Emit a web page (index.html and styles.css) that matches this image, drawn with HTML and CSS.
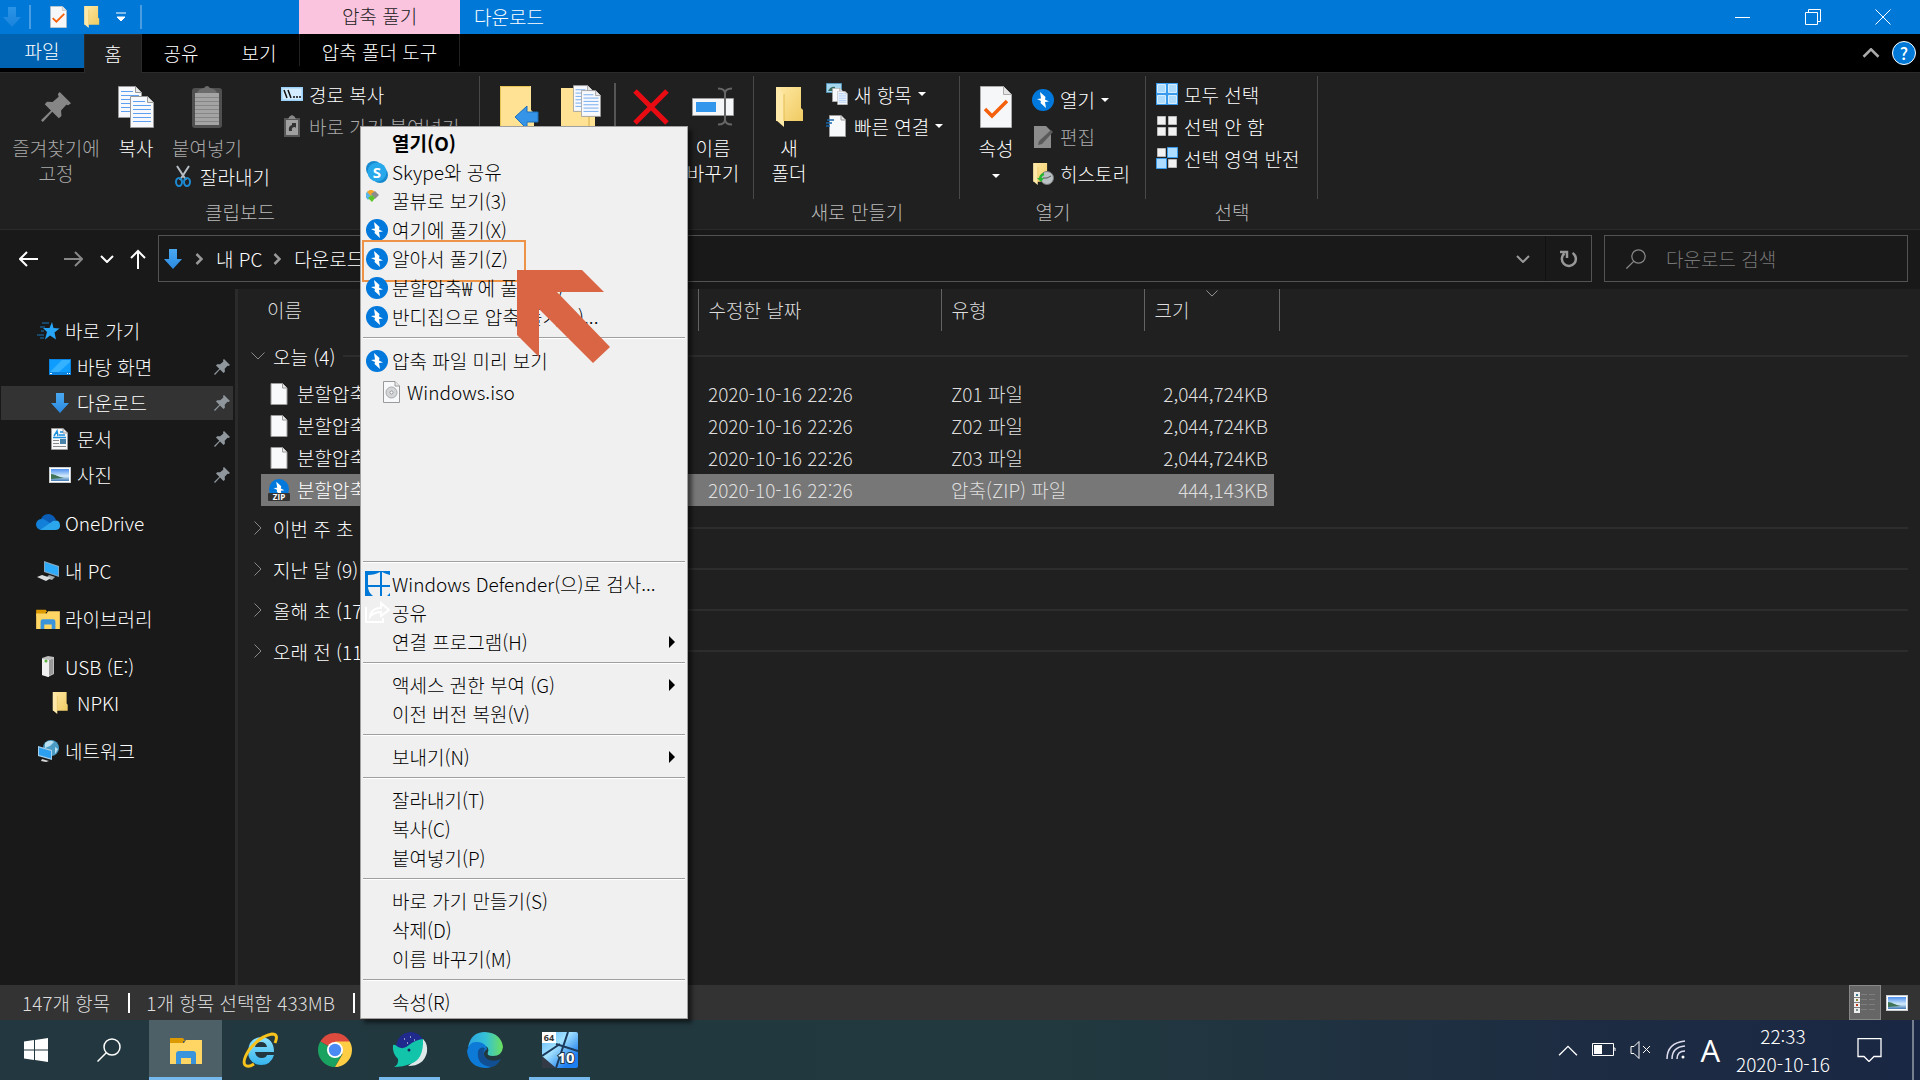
FILE: index.html
```html
<!DOCTYPE html>
<html lang="ko">
<head>
    <meta charset="UTF-8">
    <meta name="viewport" content="width=device-width, initial-scale=1.0">
    <title>다운로드</title>
    <link rel="stylesheet" href="styles.css">
</head>
<body>
    <!-- shared icons -->
    <svg class="sprite" aria-hidden="true">
        <defs>
            <linearGradient id="gFolder" x1="0" y1="0" x2="1" y2="1">
                <stop offset="0" stop-color="#ffe9a6"/>
                <stop offset="1" stop-color="#f0cb62"/>
            </linearGradient>
            <linearGradient id="gArrow" x1="0" y1="0" x2="0" y2="1">
                <stop offset="0" stop-color="#4aa8f0"/>
                <stop offset="1" stop-color="#2a8ae0"/>
            </linearGradient>
            <linearGradient id="gSky" x1="0" y1="0" x2="0" y2="1">
                <stop offset="0" stop-color="#4d8ff0"/>
                <stop offset="0.6" stop-color="#d5ecfa"/>
                <stop offset="1" stop-color="#3e78b4"/>
            </linearGradient>
            <linearGradient id="gIe" x1="0" y1="0" x2="0" y2="1">
                <stop offset="0" stop-color="#8fe3fd"/>
                <stop offset="1" stop-color="#35b4ee"/>
            </linearGradient>
            <linearGradient id="gEdge" x1="0" y1="0" x2="1" y2="0">
                <stop offset="0" stop-color="#2aa3e0"/>
                <stop offset="0.5" stop-color="#35c1d8"/>
                <stop offset="1" stop-color="#6be05c"/>
            </linearGradient>
            <linearGradient id="gGlass" x1="0" y1="0" x2="1" y2="1">
                <stop offset="0" stop-color="#5cb4f8"/>
                <stop offset="0.4" stop-color="#a4e2ff"/>
                <stop offset="0.8" stop-color="#1d7ff0"/>
            </linearGradient>
        </defs>
        <symbol id="bolt" viewBox="0 0 22 22">
            <circle cx="11" cy="11" r="11" fill="#0078dc"/>
            <path d="M8 3l5.500 5-.5 2.500 4 2-4 .5 1 6-5.500-5 .5-2-4-2 4-.5z" fill="#fff"/>
        </symbol>
        <symbol id="down" viewBox="0 0 18 20">
            <path d="M5 0h8v10h5l-9 10L0 10h5z" fill="url(#gArrow)"/>
        </symbol>
        <symbol id="folder" viewBox="0 0 28 40">
            <path d="M1 0h25v21l2 2v11H9L1 34z" fill="url(#gFolder)"/>
            <path d="M1 0l8 7v33l-8-7z" fill="#ffe9a8"/>
            <path d="M9 7v27" stroke="#e3bd55" fill="none"/>
        </symbol>
        <symbol id="page" viewBox="0 0 17 22">
            <path d="M.5.5h11.500l4.500 4.500v16.500H.5z" fill="#f8f9fa" stroke="#9a9a9a"/>
            <path d="M12 .5V5h4.500" fill="#e8e8e8" stroke="#9a9a9a"/>
        </symbol>
        <symbol id="check" viewBox="0 0 32 42">
            <path d="M.5.500h23l8 8v33H.5z" fill="#f6f7f8" stroke="#aaa"/>
            <path d="M23.500.5v8h8" fill="#e4e4e4" stroke="#aaa"/>
            <path d="M5 23l7 7 15-15" fill="none" stroke="#f4600c" stroke-width="3.500"/>
        </symbol>
        <symbol id="lined" viewBox="0 0 24 32">
            <path d="M.5.5h17l6 6v25H.5z" fill="#f7f9fc" stroke="#999"/>
            <path d="M17.500.5v6h6" fill="#e8e8e8" stroke="#999"/>
            <path d="M3 5.500h12M3 9.500h18M3 13.500h18M3 17.500h18M3 21.500h18M3 25.500h18" stroke="#5f9fef"/>
        </symbol>
        <symbol id="pin" viewBox="0 0 16 16">
            <path d="M10 0l6 6-1.500 1-1-.2-2.800 3 .2 3L9.500 14 6 10.500 1 16l-1-1L5.300 9.800 2 6.500l1.200-1.300 3 .1 3.200-2.800L9 1z" fill="currentColor"/>
        </symbol>
        <symbol id="photo" viewBox="0 0 22 16">
            <path d="M0 0h22v16H0z" fill="#c9cdd0"/>
            <path d="M1 1h20v14H1z" fill="#fff"/>
            <path d="M2 2h18v12H2z" fill="url(#gSky)"/>
            <path d="M2 7c4 0 7 3 13 4l-13 1z" fill="#3f7556"/>
        </symbol>
        <symbol id="chev" viewBox="0 0 14 8">
            <path d="M1 1l6 6 6-6" fill="none" stroke="currentColor" stroke-width="2"/>
        </symbol>
        <symbol id="thin" viewBox="0 0 14 8">
            <path d="M.5.5L7 7 13.500.5" fill="none" stroke="currentColor"/>
        </symbol>
        <symbol id="right" viewBox="0 0 8 12">
            <path d="M1.500 1l5 5-5 5" fill="none" stroke="currentColor" stroke-width="2.500"/>
        </symbol>
        <symbol id="glass" viewBox="0 0 24 24">
            <circle cx="15" cy="9" r="8" fill="none" stroke="currentColor" stroke-width="1.500"/>
            <path d="M9.500 14.500L.5 23.500" stroke="currentColor" stroke-width="1.500"/>
        </symbol>
        <symbol id="lib" viewBox="0 0 32 27">
            <path d="M0 1h13l2 3h-2v6H0z" fill="#dd9a00"/>
            <path d="M0 6h14l2-3h16v24H0z" fill="#ffd564"/>
            <path d="M6 27V17q0-3 3-3h14q3 0 3 3v10h-5v-6H11v6z" fill="#3a94dc"/>
        </symbol>
    </svg>

    <header class="titlebar">
        <div class="quick">
            <svg class="i-18 dim"><use href="#down"/></svg>
            <span class="bar"></span>
            <button aria-label="속성"><svg class="i-page"><use href="#check"/></svg></button>
            <button aria-label="새 폴더"><svg class="i-page"><use href="#folder"/></svg></button>
            <button aria-label="빠른 실행 도구 모음 사용자 지정"><svg class="i-10" viewBox="0 0 10 10"><path d="M0 1h10M1 5h8l-4 4z" fill="#fff" stroke="#fff"/></svg></button>
            <span class="bar"></span>
        </div>
        <div class="context-title">압축 풀기</div>
        <h1>다운로드</h1>
        <div class="window-buttons">
            <button aria-label="최소화"><svg viewBox="0 0 16 16"><path d="M0 8.500h15"/></svg></button>
            <button aria-label="이전 크기로 복원"><svg viewBox="0 0 16 16"><path d="M.5 3.500h12v12H.5zM3.500 3V.5h12v12H13"/></svg></button>
            <button aria-label="닫기"><svg viewBox="0 0 16 16"><path d="M.5.500l15 15M15.500.5l-15 15"/></svg></button>
        </div>
    </header>

    <nav class="tabs">
        <button class="tab file">파일</button>
        <button class="tab home">홈</button>
        <button class="tab">공유</button>
        <button class="tab">보기</button>
        <button class="tab tools">압축 폴더 도구</button>
        <div class="tab-right">
            <button aria-label="리본 최소화"><svg class="i-chev flip"><use href="#chev"/></svg></button>
            <button class="help" aria-label="도움말">?</button>
        </div>
    </nav>

    <section class="ribbon">
        <div class="group clipboard">
            <div class="group-body">
                <button class="big off wide"><span class="pic"><svg class="i-30"><use href="#pin"/></svg></span>즐겨찾기에<br>고정</button>
                <button class="big"><span class="pic"><svg width="36" height="42"><use href="#lined" width="24" height="32"/><use href="#lined" x="12" y="10" width="24" height="32"/></svg></span>복사</button>
                <div class="paste">
                    <button class="big off"><span class="pic"><svg width="30" height="42" viewBox="0 0 30 42"><rect y="2" width="30" height="40" rx="3" fill="#505050"/><path d="M3 7h24v32H3z" fill="#a4a4a4"/><path d="M3 11.500h24M3 15.500h24M3 19.500h24M3 23.500h24M3 27.500h24M3 31.500h24M3 35.500h24" stroke="#868686"/><path d="M5 7q1-4 7-5 3-4 6 0 6 1 7 5z" fill="#6c6c6c"/></svg></span>붙여넣기</button>
                    <button class="small"><svg class="i-22" viewBox="0 0 22 22"><path d="M5 1l9 14M17 1L8 15" stroke="#b6bdc4" stroke-width="2"/><g fill="none" stroke="#1c8ad2" stroke-width="2"><ellipse cx="7" cy="17" rx="3" ry="4"/><ellipse cx="15" cy="17" rx="3" ry="4"/></g></svg>잘라내기</button>
                </div>
                <div class="list">
                    <button class="small"><svg class="i-22" viewBox="0 0 22 22"><path d="M0 4h22v14H0z" fill="#9bd0f8"/><path d="M1.500 5.500h19v11h-19z" fill="#d3ecff"/><path d="M3 7l3 8M7 7l3 8M12 14h2M15 14h2M18 14h2" stroke="#111" stroke-width="1.500"/></svg>경로 복사</button>
                    <button class="small off"><svg class="i-22" viewBox="0 0 22 22"><path d="M3 3h16v19H3z" fill="#555"/><path d="M5 5h12v15H5z" fill="#a0a0a0"/><path d="M7 4q1-3 4-4 3 1 4 4z" fill="#888"/><path d="M8 16q-1-5 3-6V8h4v5l-1-1q-4 0-3 4z" fill="#333"/></svg>바로 가기 붙여넣기</button>
                </div>
            </div>
            <h2>클립보드</h2>
        </div>
        <div class="group organize">
            <div class="group-body">
                <button class="big" aria-label="이동 위치"><span class="pic"><svg width="40" height="42" viewBox="0 0 40 42"><path d="M1 0h31v24l3 3v15H1z" fill="#ffe293"/><path d="M1.500 42V.5H31" fill="none" stroke="#e9c453"/><path d="M16 31l12-11v6h11v10H28v7z" fill="#3694e8" stroke="#1d6fbb"/></svg></span></button>
                <button class="big" aria-label="복사 위치"><span class="pic"><svg width="40" height="46" viewBox="0 0 40 46"><path d="M0 4h30v24l4 3v15H0z" fill="#ffe293"/><path d="M28 30v16" stroke="#d9b04a"/><use href="#lined" x="12" y="1" width="20" height="27"/><use href="#lined" x="20" y="6" width="20" height="27"/></svg></span></button>
                <span class="divider"></span>
                <button class="big" aria-label="삭제"><span class="pic"><svg width="36" height="36" viewBox="0 0 36 36"><path d="M2 2l32 32M34 2L2 34" stroke="#e80b12" stroke-width="5"/></svg></span></button>
                <button class="big"><span class="pic"><svg width="42" height="40" viewBox="0 0 42 40"><path d="M.5 11.500h41v17H.5z" fill="#f5f6f7" stroke="#999"/><path d="M4 15h20v10H4z" fill="#3196ec"/><path d="M26 1.500q7 0 7 5v26q0 5-7 5M40 1.500q-7 0-7 5v26q0 5 7 5" fill="none" stroke="#666" stroke-width="2"/></svg></span>이름<br>바꾸기</button>
            </div>
        </div>
        <div class="group new">
            <div class="group-body">
                <button class="big"><span class="pic"><svg width="28" height="40"><use href="#folder"/></svg></span>새<br>폴더</button>
                <div class="list">
                    <button class="small"><svg class="i-22" viewBox="0 0 22 22"><path d="M.5.500h15v9H.5z" fill="#a6d6ee" stroke="#5596b8"/><path d="M2 8q3-5 7-4v4z" fill="#386b5b"/><use href="#page" x="6" y="5" width="11" height="14"/><use href="#lined" x="11" y="8" width="11" height="14"/></svg>새 항목 <i class="caret"></i></button>
                    <button class="small"><svg class="i-22" viewBox="0 0 22 22"><use href="#page" x="3" width="17" height="22"/><path d="M1 5h7M0 8h6M1 8h4M0 11h4" stroke="#1667ae" stroke-width="1.500"/></svg>빠른 연결 <i class="caret"></i></button>
                </div>
            </div>
            <h2>새로 만들기</h2>
        </div>
        <div class="group open">
            <div class="group-body">
                <button class="big"><span class="pic"><svg width="32" height="42"><use href="#check"/></svg></span>속성<br><i class="caret"></i></button>
                <div class="list loose">
                    <button class="small"><svg class="i-22"><use href="#bolt"/></svg>열기 <i class="caret"></i></button>
                    <button class="small off"><svg class="i-22" viewBox="0 0 22 22"><path d="M2 0h12l5 5v17H2z" fill="#8c8c8c"/><path d="M6 19l1-4L19 4l2 2L10 18z" fill="#5a5a5a"/></svg>편집</button>
                    <button class="small"><svg class="i-22" viewBox="0 0 22 22"><use href="#folder" width="17" height="22"/><circle cx="15" cy="15" r="6.500" fill="#bac1c4" stroke="#777"/><path d="M11 15h4l4-2" fill="none" stroke="#555"/><path d="M8 17q0-5 4-6" fill="none" stroke="#27b52f" stroke-width="2.500"/><path d="M5 15h7l-3 4z" fill="#27b52f"/></svg>히스토리</button>
                </div>
            </div>
            <h2>열기</h2>
        </div>
        <div class="group select">
            <div class="group-body">
                <div class="list">
                    <button class="small"><svg class="i-22" viewBox="0 0 22 22"><path d="M0 0h22v22H0z" fill="#3a9aeb"/><path d="M1.500 1.500h8v8h-8zM12.500 1.500h8v8h-8zM1.500 12.500h8v8h-8zM12.500 12.500h8v8h-8z" fill="#aedcff" stroke="#d5edff"/></svg>모두 선택</button>
                    <button class="small"><svg class="i-22" viewBox="0 0 22 22"><path d="M1.500 1.500h8v8h-8zM12.500 1.500h8v8h-8zM1.500 12.500h8v8h-8zM12.500 12.500h8v8h-8z" fill="#f2f2f2" stroke="#b9b9b9"/></svg>선택 안 함</button>
                    <button class="small"><svg class="i-22" viewBox="0 0 22 22"><path d="M1.500 1.500h8v8h-8zM12.500 12.500h8v8h-8z" fill="#f2f2f2" stroke="#b9b9b9"/><path d="M11.500.5h10v10h-10zM.5 11.500h10v10H.5z" fill="#aedcff" stroke="#3a9aeb"/></svg>선택 영역 반전</button>
                </div>
            </div>
            <h2>선택</h2>
        </div>
    </section>

    <div class="navbar">
        <div class="arrows">
            <button aria-label="뒤로"><svg viewBox="0 0 20 16"><path d="M19 8H2M8 1L1 8l7 7"/></svg></button>
            <button class="off" aria-label="앞으로"><svg viewBox="0 0 20 16"><path d="M1 8h17M12 1l7 7-7 7"/></svg></button>
            <button class="recent" aria-label="최근 위치"><svg viewBox="0 0 14 8"><path d="M1 1l6 6 6-6"/></svg></button>
            <button class="up" aria-label="위로"><svg viewBox="0 0 16 20"><path d="M8 20V2M1 9l7-7 7 7"/></svg></button>
        </div>
        <div class="address">
            <svg class="i-20"><use href="#down"/></svg>
            <svg class="crumb"><use href="#right"/></svg>
            <a href="#">내 PC</a>
            <svg class="crumb"><use href="#right"/></svg>
            <a href="#">다운로드</a>
            <button class="drop" aria-label="이전 위치"><svg class="i-chev"><use href="#chev"/></svg></button>
            <button class="refresh" aria-label="새로 고침"><svg width="18" height="18" viewBox="0 0 18 18"><path d="M12.500 3a7 7 0 1 1-8 .5M0 2h7v6" fill="none" stroke="#999" stroke-width="2.500"/></svg></button>
        </div>
        <label class="search">
            <svg class="i-20"><use href="#glass"/></svg>
            <input type="search" placeholder="다운로드 검색" aria-label="다운로드 검색">
        </label>
    </div>

    <div class="explorer">
        <aside class="sidebar">
            <a href="#"><svg class="i-24" viewBox="0 0 24 24"><path d="M16 3l1.500 6 6 .5-5 4 1.500 7-6-4-5 4 2-7.500-4-4h6.500z" fill="#27a5f7"/><path d="M6 4h7M4 8h5M5 12h3M1 16h7M4 19h4" stroke="#1678bd"/></svg>바로 가기</a>
            <a href="#" class="sub"><svg class="i-22" viewBox="0 0 22 22"><path d="M0 3h22v16H0z" fill="#0a84e0"/><path d="M1 4h20v12H1z" fill="#0e9cff"/><path d="M1 16L13 4h8v2L10 16z" fill="#35b2ff"/><path d="M1 17.500h2M18 17.500h1M20 17.500h1" stroke="#fff"/></svg>바탕 화면<svg class="pinned"><use href="#pin"/></svg></a>
            <a href="#" class="sub current"><svg class="i-22"><use href="#down" y="1" height="20"/></svg>다운로드<svg class="pinned"><use href="#pin"/></svg></a>
            <a href="#" class="sub"><svg class="i-22" viewBox="0 0 22 22"><use href="#page" x="2" width="17" height="22"/><path d="M5 8l3-5 1 5M11 4h3M10 7h6M4 9.500h13" stroke="#1c8fdc" fill="none" stroke-width="1.500"/><path d="M4 12.500h6M4 15.500h6M4 18.500h13" stroke="#888"/><path d="M11 11h6v5h-6z" fill="#4a83a9"/></svg>문서<svg class="pinned"><use href="#pin"/></svg></a>
            <a href="#" class="sub"><svg class="i-22"><use href="#photo"/></svg>사진<svg class="pinned"><use href="#pin"/></svg></a>
            <a href="#" class="top"><svg class="i-24" viewBox="0 0 24 24"><path d="M5 8q2-5 8-5 5 1 7 6l-8 6z" fill="#0a5cb5"/><path d="M5 19q-5-1-5-6 1-5 6-5 3 0 9 5l4 6z" fill="#1280d8"/><path d="M4 19L17 10q7-2 7 5 0 4-5 4z" fill="#2ba6ec"/></svg>OneDrive</a>
            <a href="#" class="top"><svg class="i-24" viewBox="0 0 24 24"><path d="M8 2l15 5v11L8 13z" fill="#7fa6c2"/><path d="M9 3.500L22 8v8.500L9 12z" fill="#2eaafa"/><path d="M13 16l6 2-3 3-6-2z" fill="#a3a9ad"/><path d="M6 16l9 3-5 3-9-4z" fill="#d9dde0"/></svg>내 PC</a>
            <a href="#" class="top"><svg class="i-24"><use href="#lib" y="2" height="20"/></svg>라이브러리</a>
            <a href="#" class="top"><svg class="i-24" viewBox="0 0 24 24"><path d="M6 3l6-2 6 1v17l-6 3-6-2z" fill="#bdbdbd"/><path d="M6 4l7 1v17l-7-2z" fill="#f1f1f1"/><path d="M14 5v15M16 4v15" stroke="#777"/><circle cx="10" cy="6" r="1.500" fill="#5eb53e"/></svg>USB (E:)</a>
            <a href="#" class="sub"><svg class="i-22"><use href="#folder"/></svg>NPKI</a>
            <a href="#" class="top"><svg class="i-24" viewBox="0 0 24 24"><circle cx="15" cy="9" r="8" fill="#4a9cc4"/><path d="M9 4q5-4 9-1l-4 4-5 2zM19 8l3 2-3 5z" fill="#b7dff0"/><path d="M2 7l14 4v10L2 17z" fill="#a8cfe8"/><path d="M3 8.500l12 3.500v7.500L3 16z" fill="#2d9ff0"/><path d="M6 20l7 2-3 1-5-1z" fill="#d8d8d8"/></svg>네트워크</a>
        </aside>

        <main>
            <svg class="sort"><use href="#thin"/></svg>
            <table>
                <colgroup><col class="c-name"><col class="c-date"><col class="c-type"><col class="c-size"><col></colgroup>
                <thead>
                    <tr><th>이름</th><th>수정한 날짜</th><th>유형</th><th>크기</th><td></td></tr>
                </thead>
                <tbody>
                    <tr class="today"><td colspan="5"><div class="head"><svg class="i-chev"><use href="#thin"/></svg>오늘 (4)<hr></div></td></tr>
                    <tr class="row"><td><div class="name"><svg class="i-22"><use href="#page"/></svg>분할압축.z01</div></td><td>2020-10-16 22:26</td><td>Z01 파일</td><td>2,044,724KB</td><td></td></tr>
                    <tr class="row"><td><div class="name"><svg class="i-22"><use href="#page"/></svg>분할압축.z02</div></td><td>2020-10-16 22:26</td><td>Z02 파일</td><td>2,044,724KB</td><td></td></tr>
                    <tr class="row"><td><div class="name"><svg class="i-22"><use href="#page"/></svg>분할압축.z03</div></td><td>2020-10-16 22:26</td><td>Z03 파일</td><td>2,044,724KB</td><td></td></tr>
                    <tr class="row selected"><td><div class="name"><svg class="i-22" viewBox="0 0 22 22"><use href="#bolt" width="22" height="20"/><rect y="14" width="22" height="8" rx="1" fill="#333"/><text x="11" y="21" class="zip">ZIP</text></svg>분할압축.zip</div></td><td>2020-10-16 22:26</td><td>압축(ZIP) 파일</td><td>444,143KB</td><td></td></tr>
                </tbody>
                <tbody class="closed">
                    <tr><td colspan="5"><div class="head"><svg class="i-chev"><use href="#thin"/></svg>이번 주 초 (2)<hr></div></td></tr>
                    <tr><td colspan="5"><div class="head"><svg class="i-chev"><use href="#thin"/></svg>지난 달 (9)<hr></div></td></tr>
                    <tr><td colspan="5"><div class="head"><svg class="i-chev"><use href="#thin"/></svg>올해 초 (17)<hr></div></td></tr>
                    <tr><td colspan="5"><div class="head"><svg class="i-chev"><use href="#thin"/></svg>오래 전 (115)<hr></div></td></tr>
                </tbody>
            </table>
        </main>
    </div>

    <footer class="status">
        <span>147개 항목</span>
        <span>1개 항목 선택함 433MB</span>
        <div class="views">
            <button class="on" aria-label="자세히"><svg width="22" height="22" viewBox="0 0 22 22"><path d="M0 0h6v21H0z" fill="#eee"/><path d="M2 2h2v2H2z" fill="#3a7a8c"/><path d="M2 7h2v2H2z" fill="#8a8430"/><path d="M2 12h2v2H2z" fill="#c03a1c"/><path d="M2 17h2v2H2z" fill="#7a9088"/><path d="M0 5.500h6M0 10.500h6M0 15.500h6M7 2.500h6M15 2.500h6M7 7.500h6M15 7.500h6M7 12.500h6M15 12.500h6M7 17.500h6M15 17.500h6" stroke="#7d7d7d"/></svg></button>
            <button aria-label="큰 아이콘"><svg width="22" height="16"><use href="#photo"/></svg></button>
        </div>
    </footer>

    <div class="taskbar">
        <button class="start" aria-label="시작"><svg width="24" height="24" viewBox="0 0 24 24"><path d="M0 3.500l10-1.500v9.500H0zM11 2l13-2v11.500H11zM0 12.500h10V22L0 20.500zM11 12.500h13V24l-13-2z" fill="#fff"/></svg></button>
        <button class="find" aria-label="검색"><svg width="24" height="24"><use href="#glass"/></svg></button>
        <button class="app active" aria-label="파일 탐색기"><svg width="32" height="27"><use href="#lib"/></svg></button>
        <button class="app" aria-label="Internet Explorer"><svg width="36" height="36" viewBox="0 0 36 36"><path d="M32 20H13q1 6 7 6 4 0 5-3h7q-3 10-13 10Q6 32 6 19 7 6 19 5q13 1 13 15zM13 15h12q-1-5-6-5t-6 5z" fill="url(#gIe)" fill-rule="evenodd"/><path d="M33 11q4-9-3-9Q18 4 7 18 0 29 3 33q3 3 9-1" fill="none" stroke="#f6c21c" stroke-width="3"/></svg></button>
        <button class="app" aria-label="Chrome"><svg width="34" height="34" viewBox="0 0 34 34"><path d="M17 17L2.300 8.500a17 17 0 0 1 29.400 0z" fill="#dd4b3e"/><path d="M17 17L2.300 8.500A17 17 0 0 0 17 34l7-13z" fill="#1aa260"/><path d="M17 8.500h14.700A17 17 0 0 1 17 34l7.500-13z" fill="#ffce44"/><circle cx="17" cy="17" r="8" fill="#fff"/><circle cx="17" cy="17" r="6.200" fill="#4a8af4"/></svg></button>
        <button class="app running" aria-label="Whale"><svg width="36" height="36" viewBox="0 0 36 36"><path d="M4 14Q6 1 19 0q8 1 12 7l-4 8-19 4z" fill="#1f2a8c"/><path d="M31 7q5 5 4 13-3 14-19 14 12-8 11-22z" fill="#dfe8e8"/><path d="M1 13q2-1 5 2 6 3 11-2 6-5 14-6 1 21-13 25-7 3-16 3 5-3 4-8-6-6-5-14z" fill="#12c5aa"/><circle cx="17" cy="18" r="1.500" fill="#16265a"/><path d="M12 7h1M18 5h1M22 8h1M15 11h1" stroke="#fff"/></svg></button>
        <button class="app" aria-label="Edge"><svg width="36" height="36" viewBox="0 0 36 36"><path d="M1 15Q4 0 18 0q16 1 18 15-1 9-10 9-7 0-5-4 2-5-5-7-8-3-15 2z" fill="url(#gEdge)"/><path d="M0 19Q2 9 11 10q8 1 9 7-5 3-2 9 6 10 14 4-6 6-14 6Q2 35 0 19z" fill="#0c7ad6"/><path d="M11 19q-2 14 13 16 6-1 10-8-6 3-12 1-8-4-4-12-5-2-7 3z" fill="#124f92"/></svg></button>
        <button class="app running" aria-label="64비트 10"><svg width="36" height="36" viewBox="0 0 36 36"><rect width="36" height="36" rx="2" fill="url(#gGlass)"/><path d="M26 0L14 36M14 12l22 7M0 24l18-12" fill="none" stroke="#1b3a5c" stroke-width="2"/><path d="M0 24l14 12H0z" fill="#333a46"/><path d="M0 0h14v11H0z" fill="#fff"/><text x="7" y="9" class="n64">64</text><text x="24" y="31" class="n10">10</text></svg></button>

        <div class="tray">
            <button aria-label="숨겨진 아이콘 표시"><svg width="20" height="11" class="flip"><use href="#thin"/></svg></button>
            <svg width="24" height="14" viewBox="0 0 24 14"><path d="M.5.500h21v12H.5zM22 5h1v3" fill="none" stroke="#fff"/><path d="M2 2h8v9H2z" fill="#fff"/></svg>
            <svg width="22" height="20" viewBox="0 0 22 20"><path d="M1 6.500h3l5-5v17l-5-5H1zM13 6l7 7M20 6l-7 7" fill="none" stroke="#fff"/></svg>
            <svg width="20" height="20" viewBox="0 0 20 20"><path d="M1 19Q1 3 19 1M6 19Q6 7 19 6M11 19q0-8 8-8" fill="none" stroke="#dde" stroke-width="1.500"/><circle cx="17" cy="17" r="1.500" fill="#fff"/></svg>
            <span class="ime">A</span>
            <div class="clock">22:33<br>2020-10-16</div>
            <button class="notice" aria-label="알림 센터"><svg width="26" height="24" viewBox="0 0 26 24"><path d="M1 .5h23v18h-7l-5 5-5-5H1z" fill="none" stroke="#fff" stroke-width="1.300"/></svg></button>
            <span class="peek"></span>
        </div>
    </div>

    <!-- right click menu -->
    <div class="menu">
        <button class="item bold">열기(O)</button>
        <button class="item"><svg class="ic" viewBox="0 0 22 22"><circle cx="8" cy="8" r="8" fill="#1689cf"/><circle cx="14" cy="14" r="8" fill="#1689cf"/><circle cx="11" cy="11" r="9.500" fill="#27a8ea"/><text x="11" y="17" class="skype">S</text></svg>Skype와 공유</button>
        <button class="item"><svg class="ic" viewBox="2 2 22 22"><path d="M0 7l4-4 4 4-4 5z" fill="#5ab7ea"/><path d="M3 4l4-3 4 3-4 4z" fill="#f3a62a"/><path d="M7 6l4-3 4 4-4 4z" fill="#8c8c8c"/><path d="M4 10l4-3 3 3-3 4z" fill="#5cc52a"/></svg>꿀뷰로 보기(3)</button>
        <button class="item"><svg class="ic"><use href="#bolt"/></svg>여기에 풀기(X)</button>
        <button class="item marked"><svg class="ic"><use href="#bolt"/></svg>알아서 풀기(Z)</button>
        <button class="item"><svg class="ic"><use href="#bolt"/></svg>분할압축₩ 에 풀기(W)</button>
        <button class="item"><svg class="ic"><use href="#bolt"/></svg>반디집으로 압축 풀기(B)...</button>
        <hr>
        <div class="preview">
            <button class="item"><svg class="ic"><use href="#bolt"/></svg>압축 파일 미리 보기</button>
            <button class="item inner"><svg class="ic" viewBox="0 0 22 22"><use href="#page" x="2" width="17" height="22"/><circle cx="10.500" cy="11.500" r="5.500" fill="#d3d6d8" stroke="#aaa"/><circle cx="10.500" cy="11.500" r="1.500" fill="#fff" stroke="#999"/></svg>Windows.iso</button>
        </div>
        <hr>
        <button class="item"><svg class="ic large" viewBox="0 0 25 25"><path d="M0 0h25v25H0z" fill="#0078d7"/><path d="M3 4q7 0 12-3v13H3zM17 1q4 2 8 3v10h-8zM3 16h12v9H8q-5-4-5-9zM17 16h8v6l-3 3h-5z" fill="#f0f0f0"/></svg>Windows Defender(으)로 검사...</button>
        <button class="item"><svg class="ic large" viewBox="0 0 25 25"><path d="M1 7v15h17v-4M5 17q1-9 11-9V3l8 7-8 6v-4q-7 0-11 5z" fill="none" stroke="#fff" stroke-width="2"/></svg>공유</button>
        <button class="item more">연결 프로그램(H)</button>
        <hr>
        <button class="item more">액세스 권한 부여 (G)</button>
        <button class="item">이전 버전 복원(V)</button>
        <hr>
        <button class="item more">보내기(N)</button>
        <hr>
        <button class="item">잘라내기(T)</button>
        <button class="item">복사(C)</button>
        <button class="item">붙여넣기(P)</button>
        <hr>
        <button class="item">바로 가기 만들기(S)</button>
        <button class="item">삭제(D)</button>
        <button class="item">이름 바꾸기(M)</button>
        <hr>
        <button class="item">속성(R)</button>
        <svg class="pointer" viewBox="0 0 94 94"><path d="M0 0h65l22 22H40l53 55-17 16-54-54v48L0 65z" fill="#d96544"/></svg>
    </div>
</body>
</html>
```
FILE: styles.css
```css
* {
    box-sizing: border-box;
}

body {
    margin: 0;
    min-height: 100vh;
    display: flex;
    flex-direction: column;
    position: relative;
    background-color: #202020;
    color: #fff;
    font-family: "Noto Sans CJK KR", sans-serif;
    font-size: 19px;
    font-weight: 300;
    line-height: 25px;
}

button,
input {
    font: inherit;
    color: inherit;
    background: none;
    border: none;
    padding: 0;
    white-space: nowrap;
}

a {
    color: inherit;
    text-decoration: none;
}

h1,
h2 {
    margin: 0;
    font-size: 19px;
    font-weight: 300;
}

svg {
    display: block;
    flex: none;
}

.sprite {
    position: absolute;
    width: 0;
    height: 0;
}

.i-10 { width: 10px; height: 10px; }
.i-18 { width: 18px; height: 20px; }
.i-20 { width: 20px; height: 20px; }
.i-22 { width: 22px; height: 22px; }
.i-24 { width: 24px; height: 24px; }
.i-30 { width: 30px; height: 30px; }
.i-page { width: 17px; height: 22px; }
.i-chev { width: 14px; height: 8px; }
.flip { transform: rotate(180deg); }
.dim { opacity: 0.6; }

/* title bar */
.titlebar {
    display: flex;
    height: 34px;
    background-color: #0078d7;
}

.quick {
    width: 299px;
    display: flex;
    align-items: center;
    gap: 16px;
    padding: 0 3px;
}

.quick .bar {
    width: 2px;
    height: 24px;
    margin-left: -8px;
    margin-right: 3px;
    background-color: #4a9de0;
}

.quick .bar:last-child {
    margin-left: -2px;
}

.context-title {
    width: 161px;
    text-align: center;
    line-height: 32px;
    color: #222;
    background-color: #fac4de;
}

.titlebar h1 {
    padding-left: 14px;
    line-height: 34px;
}

.window-buttons {
    margin-left: auto;
    padding-right: 2px;
    display: flex;
}

.window-buttons button {
    width: 70px;
    display: flex;
    justify-content: center;
    align-items: center;
}

.window-buttons svg {
    width: 16px;
    height: 16px;
    fill: none;
    stroke: #fff;
}

/* tabs */
.tabs {
    display: flex;
    height: 39px;
    background-color: #000;
    border-bottom: 1px solid #2b2b2b;
}

.tab {
    width: 78px;
    padding-bottom: 2px;
}

.tab.file {
    width: 84px;
    height: 34px;
    background-color: #0063b1;
}

.tab.home {
    width: 58px;
    height: 39px;
    background-color: #202020;
    border: 1px solid #2b2b2b;
    border-bottom: none;
}

.tab.tools {
    width: 161px;
    height: 32px;
    margin-left: 1px;
    padding-top: 5px;
    border: 1px solid #222;
    border-width: 0 1px;
}

.tab-right {
    margin-left: auto;
    padding-right: 4px;
    display: flex;
    align-items: center;
    gap: 12px;
    color: #aaa;
}

.tab-right .i-chev {
    width: 18px;
    height: 10px;
}

.help {
    width: 24px;
    height: 24px;
    border: 1px solid #fff;
    border-radius: 50%;
    background-color: #0078d7;
    color: #fff;
    font-size: 17px;
    font-weight: 500;
    line-height: 20px;
}

/* ribbon */
.ribbon {
    display: flex;
    height: 157px;
    padding-top: 3px;
    border-bottom: 1px solid #2b2b2b;
}

.group h2 {
    text-align: center;
    color: #bbb;
}

.group-body {
    display: flex;
    height: 123px;
    border-right: 1px solid #484848;
}

.clipboard { width: 480px; }
.organize { width: 274px; }
.new { width: 206px; }
.open { width: 186px; }
.select { width: 172px; }

.organize .group-body {
    padding-left: 8px;
}

.new .group-body {
    padding-left: 4px;
}

.select .group-body {
    padding-left: 10px;
}

.big {
    width: 62px;
    padding-top: 10px;
    display: block;
    align-self: flex-start;
}

.big.wide {
    width: 112px;
}

.clipboard .big:nth-child(2) {
    width: 48px;
}

.pic {
    height: 42px;
    margin-bottom: 7px;
    display: flex;
    justify-content: center;
    align-items: center;
}

.off {
    color: #aaa;
}

.big.off svg,
.pinned {
    color: #868686;
}

.divider {
    width: 2px;
    margin: 7px 4px 0 2px;
    background-color: #555;
}

.paste {
    width: 115px;
}

.paste .big {
    width: 94px;
}

.paste .small {
    margin-left: 12px;
}

.small {
    height: 32px;
    display: flex;
    align-items: center;
    gap: 6px;
}

.list {
    padding-top: 2px;
    padding-left: 6px;
}

.select .list {
    padding-left: 0;
}

.list.loose {
    padding-left: 0;
    padding-top: 5px;
}

.loose .small {
    height: 37px;
}

.open .big {
    width: 72px;
}

.caret {
    display: inline-block;
    vertical-align: middle;
    border: 4px solid transparent;
    border-top-color: #fff;
    border-bottom: none;
}

/* address row */
.navbar {
    display: flex;
    gap: 12px;
    height: 59px;
    padding: 5px 12px 7px 19px;
    background-color: #191919;
}

.arrows {
    width: 127px;
    display: flex;
    align-items: center;
    justify-content: space-between;
}

.arrows svg {
    width: 20px;
    height: 16px;
    fill: none;
    stroke: currentColor;
    stroke-width: 2;
}

.arrows .off {
    margin-left: 8px;
    color: #888;
}

.arrows .recent svg {
    width: 14px;
    height: 8px;
}

.arrows .up svg {
    width: 16px;
    height: 20px;
}

.address,
.search {
    display: flex;
    align-items: center;
    border: 1px solid #535353;
}

.address {
    flex: 1;
    padding-left: 4px;
}

.address a {
    margin: 0 11px 0 13px;
}

.crumb {
    width: 8px;
    height: 12px;
    color: #999;
}

.address .i-20 {
    margin-right: 12px;
}

.drop {
    margin-left: auto;
    width: 44px;
    display: flex;
    justify-content: center;
    color: #999;
}

.refresh {
    width: 46px;
    height: 100%;
    display: flex;
    justify-content: center;
    align-items: center;
    border-left: 1px solid #111;
}

.search {
    width: 304px;
    gap: 20px;
    padding-left: 21px;
    color: #888;
}

.search input {
    flex: 1;
    min-width: 0;
    outline: none;
}

.search input::placeholder {
    color: #777;
}

/* sidebar and file list */
.explorer {
    flex: 1;
    display: flex;
}

.sidebar {
    width: 238px;
    padding: 25px 2px 0 1px;
    display: flex;
    flex-direction: column;
    gap: 2px;
    background-color: #191919;
    border-right: 3px solid #2b2b2b;
}

.sidebar a {
    height: 34px;
    display: flex;
    align-items: center;
    gap: 5px;
    padding-left: 35px;
    padding-right: 3px;
    padding-bottom: 1px;
}

.sidebar .sub {
    padding-left: 48px;
    gap: 6px;
}

.sidebar .top {
    margin-top: 12px;
}

.sidebar .current {
    background-color: #333;
}

.pinned {
    width: 16px;
    height: 16px;
    margin-left: auto;
    color: #8f979d;
}

main {
    flex: 1;
    position: relative;
    padding: 0 12px 0 10px;
}

.sort {
    position: absolute;
    left: 968px;
    top: 1px;
    width: 12px;
    height: 7px;
    color: #aaa;
}

table {
    width: 100%;
    table-layout: fixed;
    border-collapse: collapse;
    color: #dedede;
}

.c-name { width: 450px; }
.c-date { width: 243px; }
.c-type { width: 203px; }
.c-size { width: 135px; }

th,
td {
    padding: 0 0 1px 10px;
    text-align: left;
    font-weight: 300;
    white-space: nowrap;
}

th {
    height: 42px;
    border-right: 1px solid #636363;
}

th:first-child {
    padding-left: 19px;
}

.today {
    height: 47px;
}

.today td {
    padding-top: 4px;
}

.closed td {
    padding-top: 4px;
}

.head {
    display: flex;
    align-items: center;
    gap: 8px;
    margin-left: -7px;
    color: #fff;
}

.head .i-chev {
    color: #888;
}

.head hr {
    flex: 1;
    height: 2px;
    margin: 0;
    border: none;
    background-color: #2d2d2d;
}

.closed tr {
    height: 41px;
}

.closed .i-chev {
    transform: rotate(-90deg);
}

.row {
    height: 32px;
}

.name {
    display: flex;
    align-items: center;
    gap: 7px;
    margin-left: 10px;
    color: #fff;
}

.row td:nth-child(4) {
    text-align: right;
    padding-right: 11px;
}

.selected td {
    background-color: #777;
}

.selected td:first-child {
    background: linear-gradient(#777, #777) no-repeat 13px 0;
}

.selected td:nth-child(4) {
    background: linear-gradient(#777, #777) no-repeat -5px 0;
}

.selected td:last-child {
    background: none;
}

.zip {
    font: bold 8px "Open Sans", sans-serif;
    text-anchor: middle;
    fill: #fff;
}

/* status bar */
.status {
    display: flex;
    align-items: center;
    height: 35px;
    padding-left: 22px;
    background-color: #333;
    color: #ddd;
}

.status span {
    padding-right: 18px;
    margin-right: 16px;
    line-height: 20px;
    border-right: 2px solid #fff;
}

.views {
    margin-left: auto;
    padding-right: 7px;
    display: flex;
    height: 100%;
}

.views button {
    width: 32px;
    display: flex;
    align-items: center;
    justify-content: center;
}

.views .on {
    background-color: #666;
    border: 1px solid #888;
}

/* taskbar */
.taskbar {
    display: flex;
    height: 60px;
    background: linear-gradient(90deg, #22373f, #22393f 55%, #1d2c42 82%, #1a2744);
}

.taskbar button {
    display: flex;
    align-items: center;
    justify-content: center;
}

.start {
    width: 72px;
}

.find {
    width: 73px;
    margin-right: 4px;
}

.app {
    width: 75px;
    position: relative;
}

.app.active {
    width: 73px;
    background-color: #4d6067;
    border-bottom: 3px solid #76b9ed;
    padding-top: 3px;
}

.app.running::after {
    content: "";
    position: absolute;
    left: 7px;
    right: 7px;
    bottom: 0;
    height: 3px;
    background-color: #76b9ed;
}

.n64 {
    font: bold 9px "Open Sans", sans-serif;
    text-anchor: middle;
    fill: #333;
}

.n10 {
    font: bold 15px "Open Sans", sans-serif;
    text-anchor: middle;
    fill: #fff;
    stroke: #234;
    stroke-width: 2px;
    paint-order: stroke;
}

.tray {
    margin-left: auto;
    display: flex;
    align-items: center;
    gap: 14px;
}

.ime {
    font-family: "Open Sans", sans-serif;
    font-size: 31px;
    font-weight: 400;
}

.clock {
    margin-left: 2px;
    text-align: center;
    line-height: 28px;
}

.notice {
    width: 52px;
}

.peek {
    width: 8px;
    height: 100%;
    margin-left: 2px;
    border-left: 2px solid #75808f;
}

/* context menu */
.menu {
    position: absolute;
    left: 360px;
    top: 126px;
    width: 328px;
    padding: 1px 2px 2px;
    background-color: #f0f0f0;
    border: 1px solid #a0a0a0;
    box-shadow: 4px 4px 4px rgba(0, 0, 0, 0.5);
    color: #000;
}

.item {
    width: 100%;
    height: 29px;
    display: flex;
    align-items: center;
    padding-left: 29px;
    position: relative;
}

.item.bold {
    font-weight: 700;
}

.ic {
    width: 22px;
    height: 22px;
    margin-left: -26px;
    margin-right: 4px;
}

.ic.large {
    width: 25px;
    height: 25px;
    margin-left: -27px;
    margin-right: 2px;
}

.item.marked::before {
    content: "";
    position: absolute;
    left: -1px;
    top: -4px;
    width: 160px;
    height: 38px;
    border: 2px solid #ec9348;
}

.item.more::after {
    content: "";
    margin-left: auto;
    margin-right: 10px;
    border: 6px solid transparent;
    border-left-color: #000;
    border-right: none;
}

.item.inner {
    padding-left: 44px;
    height: 33px;
}

.menu hr {
    margin: 6px 0;
    border: none;
    border-top: 1px solid #a0a0a0;
    border-bottom: 1px solid #fff;
}

.preview {
    height: 210px;
    padding-top: 1px;
}

.skype {
    font: bold 15px "Open Sans", sans-serif;
    text-anchor: middle;
    fill: #fff;
}

/* arrow over the menu */
.pointer {
    position: absolute;
    left: 156px;
    top: 143px;
    width: 94px;
    height: 94px;
}
```
